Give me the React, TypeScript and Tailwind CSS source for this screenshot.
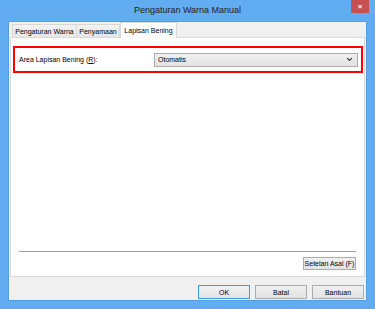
import React from 'react';

const font = { fontFamily: '"Liberation Sans", Arial, sans-serif' };

const Btn: React.FC<{ label: string; primary?: boolean; className?: string }> = ({ label, primary, className }) => (
  <button
    className={
      'flex items-center justify-center border text-[7px] leading-none text-black ' +
      (primary
        ? 'border-[#3c9be8] bg-gradient-to-b from-[#f2f2f2] to-[#e3e3e3] '
        : 'border-[#acacac] bg-gradient-to-b from-[#f0f0f0] to-[#e3e3e3] ') +
      (className ?? '')
    }
  >
    {label}
  </button>
);

const App: React.FC = () => {
  return (
    <div className="flex h-[309px] w-[375px] flex-col bg-[#62acf1] px-[8px] pb-[8px]" style={font}>
      {/* title bar */}
      <div className="relative flex h-[21px] items-center justify-center">
        <span className="text-[9px] text-[#1e1e1e]">Pengaturan Warna Manual</span>
        <div className="absolute right-[-2px] top-0 flex h-[13px] w-[18px] items-center justify-center bg-[#c75050] text-[8px] font-bold leading-none text-white">
          ×
        </div>
      </div>

      {/* client area */}
      <div className="flex flex-1 flex-col border border-[#5a9cd9] bg-[#f0f0f0] px-[1px] pb-[1px]">
        {/* tabs */}
        <div className="flex h-[15px] items-end pl-[2px]">
          <div className="flex h-[13px] w-[65px] items-center justify-center border border-b-0 border-[#d9d9d9] bg-gradient-to-b from-[#f3f3f3] to-[#e6e6e6] text-[7px] leading-none text-black">
            Pengaturan Warna
          </div>
          <div className="flex h-[13px] w-[43px] items-center justify-center border border-b-0 border-l-0 border-[#d9d9d9] bg-gradient-to-b from-[#f3f3f3] to-[#e6e6e6] text-[7px] leading-none text-black">
            Penyamaan
          </div>
          <div className="relative z-10 -mb-[1px] flex h-[16px] w-[57px] items-center justify-center border border-b-0 border-[#d9d9d9] bg-white text-[7px] leading-none text-black">
            Lapisan Bening
          </div>
        </div>

        {/* panel */}
        <div className="flex h-[240px] flex-col border border-[#d9d9d9] bg-white">
          <div className="mt-[8px] ml-[2px] mr-[1px] flex h-[27px] items-center border-[2px] border-[#ff0000] pl-[4px] pr-[3px]">
            <span className="w-[135px] text-[7px] leading-none text-black">
              Area Lapisan Bening (<span className="underline">R</span>):
            </span>
            <div className="flex h-[14px] flex-1 items-center justify-between border border-[#acacac] bg-gradient-to-b from-[#f0f0f0] to-[#e2e2e2] pl-[3px] pr-[4px]">
              <span className="text-[7px] leading-none text-black">Otomatis</span>
              <svg width="7" height="5" viewBox="0 0 7 5">
                <path d="M1.2 1.2 L3.5 3.5 L5.8 1.2" fill="none" stroke="#333" strokeWidth="1.2" />
              </svg>
            </div>
          </div>

          <div className="flex-1" />

          <div className="mx-[8px] h-px bg-[#a0a0a0]" />
          <div className="mt-[5px] mb-[6px] mr-[8px] flex justify-end">
            <Btn label="Setelan Asal (F)" className="h-[13px] w-[53px]" />
          </div>
        </div>

        {/* bottom buttons */}
        <div className="mt-[8px] flex justify-end gap-[5px] pr-[1px]">
          <Btn label="OK" primary className="h-[14px] w-[52px]" />
          <Btn label="Batal" className="h-[14px] w-[52px]" />
          <Btn label="Bantuan" className="h-[14px] w-[52px]" />
        </div>
      </div>
    </div>
  );
};

export default App;
